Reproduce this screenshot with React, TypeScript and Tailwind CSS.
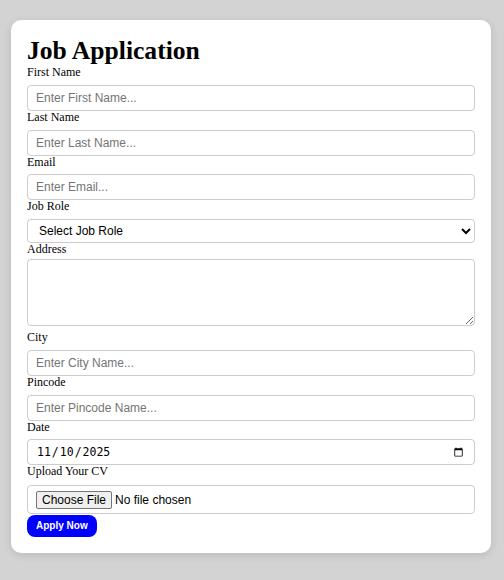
import React from "react";

const labelClass =
  "block text-[12px] leading-[13.8px] text-black [font-family:'Liberation_Serif',serif]";
const inputClass =
  "block w-full mt-[5px] h-[26px] px-2 border border-[#cccccc] rounded-[4px] bg-white text-[12px] text-black placeholder:text-[#757575] outline-none [font-family:'Liberation_Sans',Arial,sans-serif]";

function Field({
  label,
  children,
}: {
  label: string;
  children: React.ReactNode;
}) {
  return (
    <div className="flex flex-col">
      <label className={labelClass}>{label}</label>
      {children}
    </div>
  );
}

export default function App() {
  return (
    <div className="min-h-screen w-full bg-[#d3d3d3] pt-5 pl-[11px]">
      <form
        className="w-[480px] bg-white rounded-[10px] p-4 shadow-[0_2px_8px_rgba(0,0,0,0.12)]"
        onSubmit={(e) => e.preventDefault()}
      >
        <h1 className="text-[25.6px] leading-[30px] font-bold text-black [font-family:'Liberation_Serif',serif]">
          Job Application
        </h1>

        <Field label="First Name">
          <input type="text" placeholder="Enter First Name..." className={inputClass} />
        </Field>
        <Field label="Last Name">
          <input type="text" placeholder="Enter Last Name..." className={inputClass} />
        </Field>
        <Field label="Email">
          <input type="email" placeholder="Enter Email..." className={inputClass} />
        </Field>
        <Field label="Job Role">
          <select
            defaultValue=""
            className="block w-full mt-[5px] h-[24px] pl-[7px] pr-[6px] border border-[#cccccc] rounded-[4px] bg-white text-[12px] text-black outline-none [font-family:'Liberation_Sans',Arial,sans-serif]"
          >
            <option value="">Select Job Role</option>
            <option value="frontend">Frontend Developer</option>
            <option value="backend">Backend Developer</option>
            <option value="designer">UI/UX Designer</option>
          </select>
        </Field>
        <Field label="Address">
          <textarea className="block w-full mt-[2px] mb-[5px] h-[67px] px-2 py-1 border border-[#cccccc] rounded-[4px] bg-white text-[12px] outline-none [font-family:'Liberation_Sans',Arial,sans-serif]" />
        </Field>
        <Field label="City">
          <input type="text" placeholder="Enter City Name..." className={inputClass} />
        </Field>
        <Field label="Pincode">
          <input type="text" placeholder="Enter Pincode Name..." className={inputClass} />
        </Field>
        <Field label="Date">
          <input
            type="date"
            defaultValue="2025-11-10"
            className="block w-full mt-[5px] h-[26px] px-2 border border-[#cccccc] rounded-[4px] bg-white text-[11.5px] text-black outline-none [font-family:'DejaVu_Sans_Mono',monospace]"
          />
        </Field>
        <Field label="Upload Your CV">
          <input
            type="file"
            className="block w-full mt-[5.5px] h-[29px] px-2 py-[5px] border border-[#cccccc] rounded-[4px] bg-white text-[12px] leading-[14px] text-black outline-none [font-family:'Liberation_Sans',Arial,sans-serif] file:bg-[#efefef] file:border file:border-solid file:border-[#767676] file:rounded-[2px] file:px-[5px] file:py-[1px] file:mr-[3px] file:text-black file:text-[12px]"
          />
        </Field>

        <div className="mt-[1px]">
          <button
            type="submit"
            className="block h-[22px] px-[9px] rounded-[8px] bg-[#0000ff] text-white text-[10px] font-bold [font-family:'Liberation_Sans',Arial,sans-serif]"
          >
            Apply Now
          </button>
        </div>
      </form>
    </div>
  );
}
